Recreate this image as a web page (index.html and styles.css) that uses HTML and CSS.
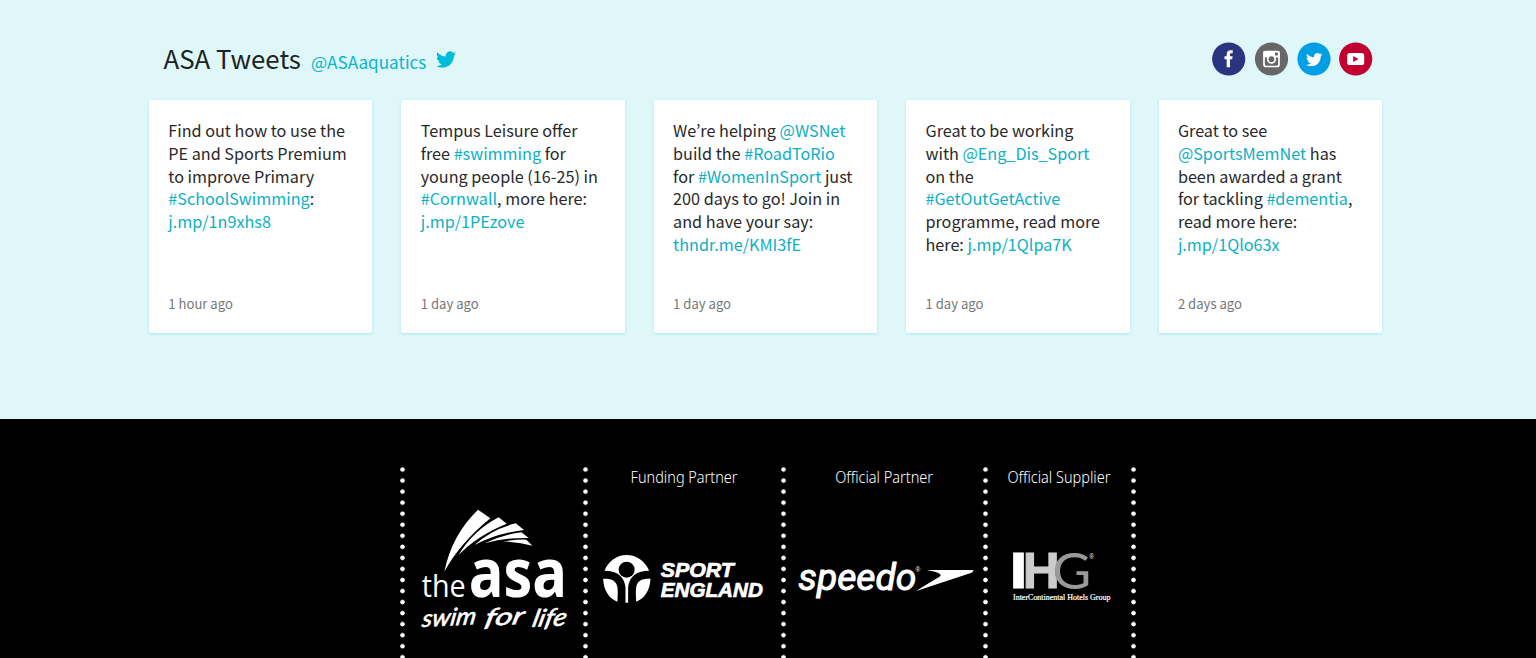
FILE: index.html
```html
<!DOCTYPE html>
<html lang="en">
<head>
<meta charset="utf-8">
<title>ASA Tweets</title>
<link rel="stylesheet" href="styles.css">
</head>
<body>
<svg width="0" height="0" class="defs" aria-hidden="true">
  <symbol id="bird" viewBox="0 2.1 24 19.6"><path d="M23.954 4.569a10 10 0 0 1-2.825.775 4.958 4.958 0 0 0 2.163-2.723c-.951.555-2.005.959-3.127 1.184a4.92 4.92 0 0 0-8.384 4.482C7.691 8.094 4.066 6.13 1.64 3.161a4.822 4.822 0 0 0-.666 2.475c0 1.71.87 3.213 2.188 4.096a4.904 4.904 0 0 1-2.228-.616v.061a4.923 4.923 0 0 0 3.946 4.827 4.996 4.996 0 0 1-2.212.085 4.937 4.937 0 0 0 4.604 3.417 9.868 9.868 0 0 1-6.102 2.105c-.39 0-.779-.023-1.17-.067a13.995 13.995 0 0 0 7.557 2.209c9.054 0 13.999-7.496 13.999-13.986 0-.209 0-.42-.015-.63a9.936 9.936 0 0 0 2.46-2.548z"/></symbol>
</svg>
<section class="tweets">
  <header class="tweets-head">
    <h2 class="title">ASA Tweets</h2>
    <a class="handle">@ASAaquatics</a>
    <svg class="head-bird" width="20" height="17"><use href="#bird"/></svg>
    <nav class="social">
      <svg width="34" height="34" viewBox="0 0 34 34"><circle cx="16.700" cy="17" r="16.6" fill="#29367f"/><path fill="#fff" d="M14.7 25.3v-8.1h-2.2v-3h2.2v-1.7c0-2.7 1.4-4.2 3.9-4.2h2.1v3h-1.4c-1 0-1.3.5-1.3 1.4v1.5h2.6l-.4 3H18v8.1z"/></svg>
      <svg width="34" height="34" viewBox="-.5 0 34 34"><circle cx="17" cy="17" r="16.6" fill="#676767"/><rect x="9.5" y="9.5" width="15" height="15" rx="2" fill="none" stroke="#fff" stroke-width="1.7"/><path fill="#fff" d="M9 9h16v6.4h-4.3a4.4 4.4 0 0 0-7.4 0H9z"/><rect x="20.4" y="10.6" width="3" height="2.8" rx=".4" fill="#676767"/><circle cx="17" cy="17.2" r="3.7" fill="#676767" stroke="#fff" stroke-width="1.7"/></svg>
      <svg width="34" height="34" viewBox="0 0 34 34"><circle cx="17" cy="17" r="16.6" fill="#009fe3"/><use href="#bird" x="9" y="10.6" width="16.4" height="14" fill="#fff"/></svg>
      <svg width="34" height="34" viewBox="0 0 34 34"><circle cx="16.700" cy="17" r="16.6" fill="#c10230"/><rect x="8.200" y="10.9" width="17" height="12.2" rx="2.6" fill="#fff"/><path d="M14.2 13.9v6.2l5.3-3.1z" fill="#c10230"/></svg>
    </nav>
  </header>
  <div class="cards">
    <article class="card"><p class="text">Find out how to use the<br>PE and Sports Premium<br>to improve Primary<br><a>#SchoolSwimming</a>:<br><a>j.mp/1n9xhs8</a></p><time class="ago">1 hour ago</time></article>
    <article class="card"><p class="text">Tempus Leisure offer<br>free <a>#swimming</a> for<br>young people (16-25) in<br><a>#Cornwall</a>, more here:<br><a>j.mp/1PEzove</a></p><time class="ago">1 day ago</time></article>
    <article class="card"><p class="text">We’re helping <a>@WSNet</a><br>build the <a>#RoadToRio</a><br>for <a>#WomenInSport</a> just<br>200 days to go! Join in<br>and have your say:<br><a>thndr.me/KMI3fE</a></p><time class="ago">1 day ago</time></article>
    <article class="card"><p class="text">Great to be working<br>with <a>@Eng_Dis_Sport</a><br>on the<br><a>#GetOutGetActive</a><br>programme, read more<br>here: <a>j.mp/1Qlpa7K</a></p><time class="ago">1 day ago</time></article>
    <article class="card"><p class="text">Great to see<br><a>@SportsMemNet</a> has<br>been awarded a grant<br>for tackling <a>#dementia</a>,<br>read more here:<br><a>j.mp/1Qlo63x</a></p><time class="ago">2 days ago</time></article>
  </div>
</section>
<footer class="partners">
  <div class="partner">
    <h3 class="role"></h3>
    <svg class="logo" viewBox="400.3 500 182.9 150" width="182.9" height="150" fill="#fff">
      <g transform="translate(410 500) scale(.33333)">
        <path d="M205 29 242 55Q150 130 104 215Q126 105 205 29z"/>
        <path d="M267 52 291 71Q200 108 146 166Q190 92 267 52z"/>
        <path d="M318 70 343 90Q260 100 195 135Q245 88 318 70z"/>
        <path d="M335 97 357 114Q290 112 225 130Q280 103 335 97z"/>
        <path d="M350 119 368 137Q330 127 280 124Q320 118 350 119z"/>
      </g>
      <text class="asa-the" x="422" y="597.3" textLength="44" lengthAdjust="spacingAndGlyphs">the</text>
      <text class="asa-name" x="469" y="597.3" textLength="98.5" lengthAdjust="spacingAndGlyphs">asa</text>
      <g class="asa-tag">
        <text transform="translate(421.5 627) rotate(-3) skewX(-12)" textLength="54" lengthAdjust="spacingAndGlyphs">swim</text>
        <text transform="translate(484 626) rotate(-3) skewX(-16)" textLength="39" lengthAdjust="spacingAndGlyphs">for</text>
        <text transform="translate(531.500 627) rotate(-3) skewX(-16)" textLength="34" lengthAdjust="spacingAndGlyphs">life</text>
      </g>
    </svg>
  </div>
  <div class="partner">
    <h3 class="role"><span>Funding Partner</span></h3>
    <svg class="logo" viewBox="583.2 500 197.5 150" width="197.5" height="150" fill="#fff">
      <g transform="translate(600 550) scale(.33333)">
        <path d="M14 62C26 33 51 15 80 15C110 15 136 33 148 62C112 62 88 78 85 112V158H77V112C74 78 50 62 14 62z"/>
        <path d="M10 86C36 85 50 92 53 112C55 128 53 142 53 155C28 146 11 120 10 86z"/>
        <path d="M152 86C126 85 112 92 109 112C107 128 109 142 109 155C134 146 151 120 152 86z"/>
        <circle cx="80.500" cy="59" r="24" fill="#000"/>
      </g>
      <text class="sport" x="661" y="576.600" textLength="73" lengthAdjust="spacingAndGlyphs">SPORT</text>
      <text class="sport" x="661" y="596.800" textLength="102" lengthAdjust="spacingAndGlyphs">ENGLAND</text>
    </svg>
  </div>
  <div class="partner">
    <h3 class="role"><span>Official Partner</span></h3>
    <svg class="logo" viewBox="780.7 500 202 150" width="202" height="150" fill="#fff">
      <text class="speedo" x="798" y="589.800" textLength="118" lengthAdjust="spacingAndGlyphs">speedo</text>
      <text class="reg" x="915.200" y="571.500">®</text>
      <path d="M926.700 570H973.400L972 572.500L916 591Q921 587.500 938 577.500Q946 573.500 926.700 570z"/>
    </svg>
  </div>
  <div class="partner">
    <h3 class="role"><span>Official Supplier</span></h3>
    <svg class="logo" viewBox="982.7 500 148.1 150" width="148.1" height="150" fill="#fff">
      <text class="ihg-i" x="1009.300" y="588.500" textLength="18" lengthAdjust="spacingAndGlyphs">I</text>
      <text class="ihg-h" x="1022.500" y="588.500" textLength="37" lengthAdjust="spacingAndGlyphs">H</text>
      <text class="ihg-g" x="1052" y="589.200" textLength="39" lengthAdjust="spacingAndGlyphs">G</text>
      <text class="reg" x="1089" y="559.500">®</text>
      <text class="ihg-tag" x="1012.700" y="599.800" textLength="97.500" lengthAdjust="spacingAndGlyphs">InterContinental Hotels Group</text>
    </svg>
  </div>
  <div class="partner-end"></div>
</footer>
</body>
</html>
```

FILE: styles.css
```css
* { box-sizing: border-box; }
body {
  margin: 0;
  height: 658px;
  overflow: hidden;
  background: #000;
  font-family: "Noto Sans CJK KR", "Open Sans", sans-serif;
}
.defs { display: block; }
.tweets {
  height: 419px;
  padding: 36px 154px 0 149px;
  background: #dff7f9;
}
.tweets-head {
  display: flex;
  align-items: baseline;
  height: 63.500px;
  padding: 0 9px 0 14.500px;
}
.title {
  margin: 0 10px 0 0;
  font-size: 25.800px;
  font-weight: 400;
  line-height: 44px;
  color: #1c2424;
}
.handle { font-size: 17.100px; color: #0bb4ca; }
.head-bird {
  margin: 15px 0 0 9.500px;
  align-self: flex-start;
  fill: #00bcd8;
}
.social {
  display: flex;
  align-self: flex-start;
  gap: 8.400px;
  margin: 6px 0 0 auto;
}
.cards {
  display: grid;
  grid-template-columns: repeat(5, 1fr);
  gap: 29px;
}
.card {
  display: flex;
  flex-direction: column;
  justify-content: space-between;
  height: 233px;
  padding: 19.500px 0 17px 19.300px;
  border-radius: 2px;
  background: #fff;
  box-shadow: 0 1px 3px rgba(0, 188, 216, .25);
}
.text {
  margin: 0;
  font-size: 16.200px;
  line-height: 22.800px;
  white-space: nowrap;
  color: #292929;
}
.text a { color: #0bb0c5; }
.ago { font-size: 13.100px; line-height: 24px; color: #777; }
.partners {
  display: grid;
  grid-template-columns: 182.900px 197.500px 202px 148.100px 5px;
  height: 239px;
  padding: 44.800px 0 0 400.300px;
}
.partner, .partner-end {
  overflow: hidden;
  background: radial-gradient(circle at 2.500px 5.500px, #fff 1.900px, transparent 2.600px) 0 0 / 5px 11.060px repeat-y;
}
.role {
  height: 36.200px;
  margin: 0;
  padding-left: 5px;
  font: 300 16px/27px "Noto Sans", sans-serif;
  font-variant-ligatures: none;
  text-align: center;
  white-space: nowrap;
  color: #fff;
}
.role span { display: inline-block; transform: scaleX(.905); }
.logo { display: block; }
.asa-the { font: 400 31.500px "Open Sans", sans-serif; }
.asa-name { font: 700 69px "Open Sans", sans-serif; }
.asa-tag { font: italic 400 24px Lato, sans-serif; stroke: #fff; stroke-width: .6px; }
.sport { font: italic 700 20.500px "Liberation Sans", Arial, sans-serif; stroke: #fff; stroke-width: .7px; }
.speedo { font: italic 400 36px Roboto, sans-serif; stroke: #fff; stroke-width: 1px; }
.reg { font: 6.500px "Liberation Sans", sans-serif; }
.ihg-i { font: 700 50px "Liberation Sans", sans-serif; stroke: #fff; stroke-width: 1px; }
.ihg-h { font: 700 50px "Liberation Sans", sans-serif; fill: #ccc; stroke: #ccc; stroke-width: 1px; }
.ihg-g { font: 400 50px Lato, sans-serif; fill: #999; }
.ihg-tag { font: 400 7.200px "Liberation Serif", serif; stroke: #fff; stroke-width: .2px; }
```
